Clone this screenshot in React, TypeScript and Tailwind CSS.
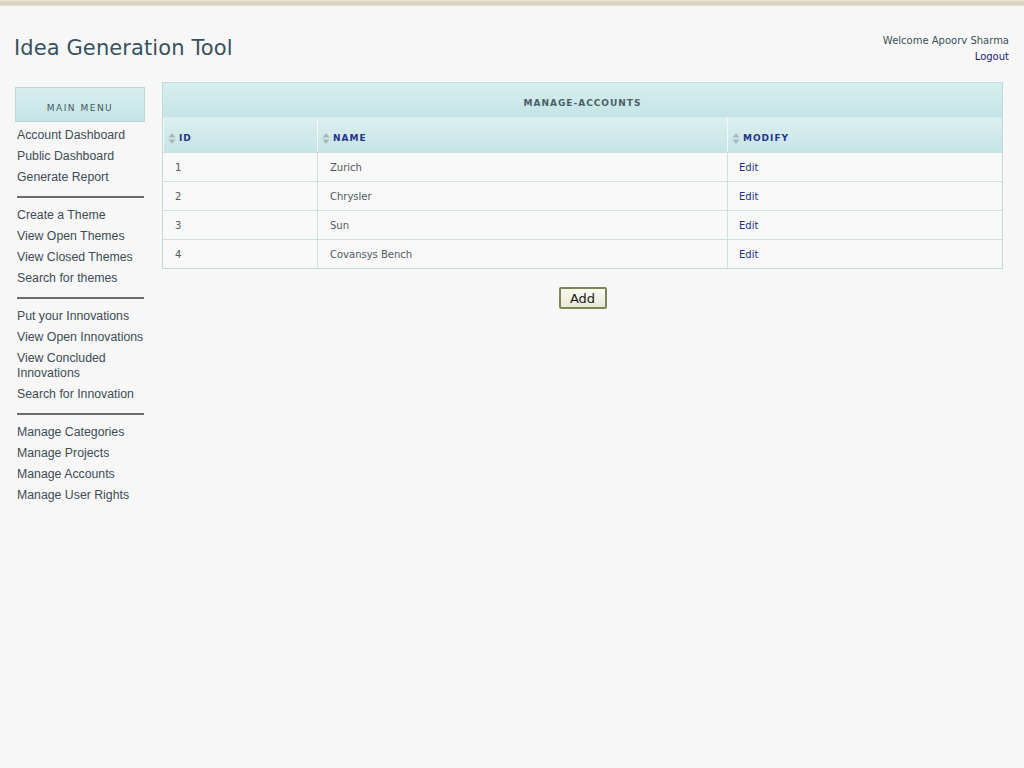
import { Fragment } from 'react';

const menuGroups: string[][] = [
  ['Account Dashboard', 'Public Dashboard', 'Generate Report'],
  ['Create a Theme', 'View Open Themes', 'View Closed Themes', 'Search for themes'],
  ['Put your Innovations', 'View Open Innovations', 'View Concluded Innovations', 'Search for Innovation'],
  ['Manage Categories', 'Manage Projects', 'Manage Accounts', 'Manage User Rights'],
];

const accounts = [
  { id: 1, name: 'Zurich' },
  { id: 2, name: 'Chrysler' },
  { id: 3, name: 'Sun' },
  { id: 4, name: 'Covansys Bench' },
];

const tahoma = { fontFamily: '"DejaVu Sans", Verdana, sans-serif' };

function SortIcon() {
  return (
    <svg width="8" height="13" viewBox="0 0 8 13" className="shrink-0">
      <path d="M4 1 L7.5 5.5 L0.5 5.5 Z" fill="#a9b9bb" />
      <path d="M4 12 L7.5 7.5 L0.5 7.5 Z" fill="#a9b9bb" />
    </svg>
  );
}

function HeaderCell({ label, className }: { label: string; className: string }) {
  return (
    <div
      className={`flex items-center gap-[3px] pl-[4px] pt-[6px] h-[34px] border-l border-white/70 bg-gradient-to-b from-[#dcefef] to-[#c6e4e6] ${className}`}
    >
      <SortIcon />
      <span className="text-[9px] font-bold tracking-[1px] text-[#27348b] pt-[1px]">{label}</span>
    </div>
  );
}

export default function App() {
  return (
    <div className="min-h-[768px] w-full bg-[#f7f7f7]" style={tahoma}>
      <div className="h-[6px] w-full bg-gradient-to-b from-[#ece8d8] via-[#d6d0ba] to-[#e6e2d0]" />
      <div className="flex justify-between pl-[14px] pr-[15px] h-[76px]">
        <h1 className="text-[21px] leading-none mt-[32px] text-[#37525c] tracking-[0.1px]">
          Idea Generation Tool
        </h1>
        <div className="text-right text-[10px] leading-[16px] mt-[27px]">
          <div className="text-[#3d5058]">Welcome Apoorv Sharma</div>
          <div className="text-[#1b2377]">Logout</div>
        </div>
      </div>
      <div className="flex pl-[15px] pr-[21px] gap-[17px]">
        <aside className="w-[130px] shrink-0 mt-[5px]">
          <div className="h-[35px] pt-[9px] flex items-center justify-center border border-[#b9d8d8] bg-gradient-to-b from-[#d9eeee] to-[#c4e4e6]">
            <span className="text-[9px] tracking-[1.5px] text-[#3f5a62]">MAIN MENU</span>
          </div>
          <nav className="pt-[3px]" style={{ fontFamily: '"Liberation Sans", Arial, sans-serif' }}>
            {menuGroups.map((group, gi) => (
              <Fragment key={gi}>
                {gi > 0 && <div className="mt-[8px] mb-[7px] ml-[2px] w-[127px] h-[2px] bg-[#6b6b6b]" />}
                {group.map((item) => (
                  <div key={item} className="pl-[2px] py-[3px] text-[12.3px] leading-[15px] text-[#3d4c55]">
                    {item}
                  </div>
                ))}
              </Fragment>
            ))}
          </nav>
        </aside>
        <main className="flex-1 flex flex-col items-center">
          <div className="w-full border border-[#c2dada]">
            <div className="h-[35px] pt-[8px] flex items-center justify-center bg-gradient-to-b from-[#d9eeee] to-[#c4e4e6] border-b border-[#d8ecec]">
              <span className="text-[9px] font-bold tracking-[1px] text-[#4a6068]">MANAGE-ACCOUNTS</span>
            </div>
            <div className="flex">
              <HeaderCell label="ID" className="w-[154px]" />
              <HeaderCell label="NAME" className="w-[410px]" />
              <HeaderCell label="MODIFY" className="flex-1" />
            </div>
            {accounts.map((a) => (
              <div key={a.id} className="flex h-[29px] border-t border-[#cfdede] bg-[#f8f8f8] text-[10px] text-[#4f5a60]">
                <div className="w-[154px] pl-[12px] flex items-center">{a.id}</div>
                <div className="w-[410px] pl-[12px] flex items-center border-l border-[#cfdede]">{a.name}</div>
                <div className="flex-1 pl-[11px] flex items-center border-l border-[#cfdede] text-[#1f2f86]">Edit</div>
              </div>
            ))}
          </div>
          <button
            className="mt-[18px] w-[48px] h-[22px] rounded-[2px] border-2 border-[#7b8556] bg-gradient-to-b from-[#fbfbf3] to-[#e9e8d8] text-[13px] text-[#1a1a1a] leading-none"
            style={{ fontFamily: '"DejaVu Sans", Tahoma, sans-serif' }}
          >
            Add
          </button>
        </main>
      </div>
    </div>
  );
}
